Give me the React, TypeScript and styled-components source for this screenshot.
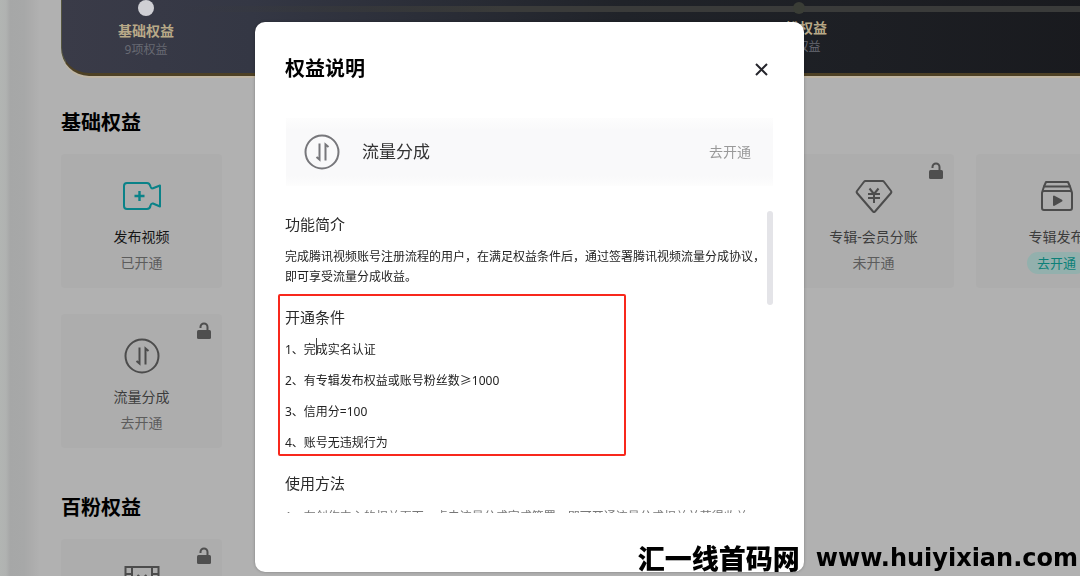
import React from "react";
import styled, { createGlobalStyle } from "styled-components";

const GlobalStyle = createGlobalStyle`
  *, *::after { box-sizing: border-box; margin: 0; padding: 0; }
  body {
    margin: 0;
    overflow: hidden;
    background: #b1b1b1;
    font-family: "Noto Sans", "Noto Sans CJK SC", sans-serif;
    color: #000;
  }
`;

const Page = styled.div`
  display: flex;
  height: 100vh;
  overflow: hidden;
`;

const SideRail = styled.div`
  flex: 0 0 61px;
  background: linear-gradient(90deg, #b2b5b3 0, #b0b2b1 6px, #a6a7a7 10px, #a7a8a8 24px, #acacac 32px, #b1b1b1 40px);
`;

const Main = styled.main`
  flex: 1 0 auto;
`;

const Banner = styled.div`
  height: 76px;
  display: flex;
  gap: 485px;
  border-bottom: 3px solid #4e4125;
  border-left: 1px solid #55553f;
  border-bottom-left-radius: 28px;
  background:
    linear-gradient(90deg, transparent 118px, #3a3b3a 440px) 0 6px / 100% 6px no-repeat,
    linear-gradient(90deg, #3a3b48 0, #343744 190px, #202329 560px, #1d1f24 800px, #18191d 100%);
  box-shadow: 0 2px 0 #c0b6a4;
`;

const Step = styled.div<{ $active?: boolean }>`
  width: 168px;
  display: flex;
  flex-direction: column;
  align-items: center;
  padding-top: ${(p) => (p.$active ? 0 : 2)}px;
`;

const StepDot = styled.span<{ $active?: boolean }>`
  width: ${(p) => (p.$active ? 16 : 12)}px;
  height: ${(p) => (p.$active ? 16 : 12)}px;
  margin-bottom: ${(p) => (p.$active ? 5 : 4)}px;
  border-radius: 50%;
  background: ${(p) => (p.$active ? "#cfcfd4" : "#3a3d36")};
`;

const StepName = styled.span`
  font-size: 14px;
  line-height: 20px;
  font-weight: 700;
  color: #b8a988;
`;

const StepCount = styled.span`
  font-size: 12px;
  line-height: 18px;
  color: #686a73;
`;

const SectionTitle = styled.h2`
  font-size: 20px;
  line-height: 28px;
  font-weight: 700;
`;

const Section = styled.section`
  padding-top: 33px;
  padding-bottom: 13px;
`;

const CardGrid = styled.div`
  display: grid;
  grid-template-columns: repeat(6, 161px);
  grid-auto-rows: 134px;
  gap: 26px 22px;
  margin-top: 17px;
`;

const Card = styled.article<{ $column?: number }>`
  position: relative;
  grid-column: ${(p) => p.$column ?? "auto"};
  display: flex;
  flex-direction: column;
  align-items: center;
  padding-top: 24px;
  border-radius: 4px;
  background: #adadad;
  color: #4c4c4c;
`;

const CardIcon = styled.div`
  height: 36px;
  display: flex;
  align-items: center;
`;

const CardName = styled.h3<{ $active?: boolean }>`
  margin-top: 13px;
  font-size: 14px;
  line-height: 20px;
  font-weight: 400;
  color: ${(p) => (p.$active ? "#161616" : "#3c3c3c")};
`;

const CardStatus = styled.p`
  margin-top: 6px;
  font-size: 14px;
  line-height: 20px;
  color: #5c5c5c;
`;

const CardAction = styled.button`
  margin-top: 5px;
  width: 60px;
  border: 0;
  border-radius: 11px;
  background: #93b0ad;
  color: #0c8078;
  font: 13px/22px "Noto Sans", "Noto Sans CJK SC", sans-serif;
`;

const LockBadge = styled.svg`
  position: absolute;
  top: 8px;
  right: 11px;
`;

const Overlay = styled.div`
  position: fixed;
  inset: 0;
  display: flex;
  justify-content: center;
  padding: 22px 21px 4px 0;
`;

const Dialog = styled.div`
  width: 100%;
  max-width: 549px;
  display: flex;
  flex-direction: column;
  padding: 33px 31px 59px 22px;
  border-radius: 10px;
  background: #fff;
  box-shadow: 0 0 3px rgba(0, 0, 0, 0.3);
`;

const DialogHeader = styled.header`
  display: flex;
  align-items: center;
  justify-content: space-between;
  padding-left: 8px;
`;

const DialogTitle = styled.h1`
  font-size: 20px;
  line-height: 28px;
  font-weight: 700;
`;

const CloseButton = styled.button`
  width: 24px;
  height: 26px;
  display: flex;
  align-items: center;
  justify-content: center;
  border: 0;
  background: none;
  color: #26262c;
`;

const Feature = styled.div`
  display: flex;
  align-items: center;
  gap: 22px;
  height: 68px;
  margin: 35px 0 20px 9px;
  padding: 0 22px 0 18px;
  background: linear-gradient(#fdfdfd, #f9f9fa 12px, #f9f9fa 58px, #fdfdfd);
  color: #77777b;
`;

const FeatureName = styled.span`
  flex: 1;
  font-size: 17px;
  line-height: 24px;
  color: #333;
`;

const FeatureAction = styled.button`
  border: 0;
  background: none;
  color: #999;
  font: 14px/20px "Noto Sans", "Noto Sans CJK SC", sans-serif;
`;

const ScrollArea = styled.div`
  flex: 1;
  min-height: 0;
  display: flex;
`;

const ScrollContent = styled.div`
  flex: 1;
  overflow: hidden;
  padding: 6px 0 0 8px;
`;

const ScrollThumb = styled.div`
  width: 6px;
  height: 94px;
  margin-top: 5px;
  border-radius: 3px;
  background: #e4e4e8;
`;

const Block = styled.section<{ $marked?: boolean }>`
  position: relative;
  margin-bottom: 18px;
  &::after {
    content: "";
    display: ${(p) => (p.$marked ? "block" : "none")};
    position: absolute;
    inset: -11px auto -3px -7px;
    width: 348px;
    border: 2px solid #f8281c;
    border-radius: 2px;
  }
`;

const BlockTitle = styled.h2`
  font-size: 15px;
  line-height: 24px;
  font-weight: 400;
  color: #2b2b2b;
`;

const Paragraph = styled.p`
  margin-top: 11px;
  font-size: 12px;
  line-height: 20px;
  color: #222;
`;

const Rules = styled.ol<{ $muted?: boolean }>`
  list-style: none;
  display: flex;
  flex-direction: column;
  gap: 11px;
  margin-top: ${(p) => (p.$muted ? 12 : 11)}px;
  font-size: 12px;
  line-height: 20px;
  white-space: nowrap;
  color: ${(p) => (p.$muted ? "#777" : "#222")};
`;

const TextCursor = styled.svg`
  position: absolute;
  left: 28px;
  top: 33px;
`;

const Watermark = styled.div`
  position: fixed;
  right: 2px;
  bottom: 0;
  display: flex;
  align-items: center;
  gap: 16px;
  line-height: 36px;
  font-weight: 900;
`;

const WatermarkName = styled.span`
  font-family: "Noto Sans CJK SC", sans-serif;
  font-size: 27px;
`;

const WatermarkSite = styled.span`
  font-family: "DejaVu Sans", sans-serif;
  font-size: 24px;
`;

const SwapIcon = () => (
  <svg width="36" height="36" viewBox="0 0 36 36" fill="none" stroke="currentColor" strokeWidth="2">
    <circle cx="18" cy="18" r="16.5" />
    <path d="M15.500 9.500V25.500L12.500 23M21.500 26.500V10.500L24.500 13" />
  </svg>
);

const CameraIcon = () => (
  <svg width="40" height="30" viewBox="0 0 40 30" fill="none" stroke="#0a8288" strokeWidth="2" strokeLinejoin="round">
    <path d="M5 2H25C27.500 2 28 3.500 28.500 5.500Q29.200 8 31 7.200L38 4.500V25.500L31 22.500Q29.200 22 28.500 24.500Q28 28 25 28H5Q2 28 2 25V5Q2 2 5 2Z" />
    <path d="M17.500 10V20M12.500 15H22.500" strokeWidth="2.4" />
  </svg>
);

const DiamondIcon = () => (
  <svg width="38" height="34" viewBox="0 0 38 34" fill="none" stroke="currentColor" strokeWidth="2" strokeLinejoin="round">
    <path d="M10.500 2H27.500Q28.500 2 29.200 3L36 12Q36.700 13 36 14L20 32.500Q19 33.500 18 32.500L2 14Q1.300 13 2 12L8.800 3Q9.500 2 10.500 2Z" />
    <path d="M14.500 9.500L19 15L23.500 9.500M13 15H25M13 19H25M19 15V24" />
  </svg>
);

const AlbumIcon = () => (
  <svg width="34" height="32" viewBox="0 0 34 32" fill="none" stroke="currentColor" strokeWidth="2" strokeLinejoin="round">
    <path d="M4 6.500L6 2H28L30 6.500" />
    <path d="M2.500 11L4 6.500H30L31.500 11" />
    <rect x="2" y="11" width="30" height="19" rx="2" />
    <path d="M14 16.500V25L21.500 20.700Z" fill="currentColor" />
  </svg>
);

const FilmIcon = () => (
  <svg width="36" height="30" viewBox="0 0 36 30" fill="none" stroke="currentColor" strokeWidth="2">
    <rect x="1.500" y="1" width="33" height="28" />
    <path d="M8 1V29M28 1V29M1.500 8H8M28 8H34.500M1.500 15H8M28 15H34.500M1.500 22H8M28 22H34.500M13.500 9L18 13L22.500 9" />
  </svg>
);

const Lock = () => (
  <LockBadge width="14" height="18" viewBox="0 0 14 18" fill="none">
    <path d="M3.500 6V5A3.500 3.500 0 0 1 10.500 5V8" stroke="#4f4f4f" strokeWidth="2" />
    <rect y="8" width="14" height="9" rx="1.500" fill="#4f4f4f" />
  </LockBadge>
);

export default function App() {
  return (
    <>
      <GlobalStyle />
      <Page>
        <SideRail />
        <Main>
          <Banner>
            <Step $active>
              <StepDot $active />
              <StepName>基础权益</StepName>
              <StepCount>9项权益</StepCount>
            </Step>
            <Step>
              <StepDot />
              <StepName>万粉权益</StepName>
              <StepCount>7项权益</StepCount>
            </Step>
          </Banner>
          <Section>
            <SectionTitle>基础权益</SectionTitle>
            <CardGrid>
              <Card>
                <CardIcon><CameraIcon /></CardIcon>
                <CardName $active>发布视频</CardName>
                <CardStatus>已开通</CardStatus>
              </Card>
              <Card $column={5}>
                <Lock />
                <CardIcon><DiamondIcon /></CardIcon>
                <CardName>专辑-会员分账</CardName>
                <CardStatus>未开通</CardStatus>
              </Card>
              <Card $column={6}>
                <CardIcon><AlbumIcon /></CardIcon>
                <CardName>专辑发布</CardName>
                <CardAction>去开通</CardAction>
              </Card>
              <Card>
                <Lock />
                <CardIcon><SwapIcon /></CardIcon>
                <CardName>流量分成</CardName>
                <CardStatus>去开通</CardStatus>
              </Card>
            </CardGrid>
          </Section>
          <Section>
            <SectionTitle>百粉权益</SectionTitle>
            <CardGrid>
              <Card>
                <Lock />
                <CardIcon><FilmIcon /></CardIcon>
              </Card>
            </CardGrid>
          </Section>
        </Main>
      </Page>

      <Overlay>
        <Dialog role="dialog" aria-modal="true" aria-labelledby="dialog-title">
          <DialogHeader>
            <DialogTitle id="dialog-title">权益说明</DialogTitle>
            <CloseButton aria-label="关闭">
              <svg width="13" height="13" viewBox="0 0 13 13" fill="none" stroke="currentColor" strokeWidth="2">
                <path d="M1 1L12 12M12 1L1 12" />
              </svg>
            </CloseButton>
          </DialogHeader>
          <Feature>
            <SwapIcon />
            <FeatureName>流量分成</FeatureName>
            <FeatureAction>去开通</FeatureAction>
          </Feature>
          <ScrollArea>
            <ScrollContent>
              <Block>
                <BlockTitle>功能简介</BlockTitle>
                <Paragraph>
                  完成腾讯视频账号注册流程的用户，在满足权益条件后，通过签署腾讯视频流量分成协议，即可享受流量分成收益。
                </Paragraph>
              </Block>
              <Block $marked>
                <BlockTitle>开通条件</BlockTitle>
                <Rules>
                  <li>1、完成实名认证</li>
                  <li>2、有专辑发布权益或账号粉丝数≥1000</li>
                  <li>3、信用分=100</li>
                  <li>4、账号无违规行为</li>
                </Rules>
                <TextCursor width="6" height="17" viewBox="0 0 6 17" stroke="#444" strokeWidth="1">
                  <path d="M3.500 0V17" />
                </TextCursor>
              </Block>
              <Block>
                <BlockTitle>使用方法</BlockTitle>
                <Rules $muted>
                  <li>1、在创作中心的权益页面，点击流量分成完成签署，即可开通流量分成权益并获得收益</li>
                </Rules>
              </Block>
            </ScrollContent>
            <ScrollThumb />
          </ScrollArea>
        </Dialog>
      </Overlay>

      <Watermark>
        <WatermarkName>汇一线首码网</WatermarkName>
        <WatermarkSite>www.huiyixian.com</WatermarkSite>
      </Watermark>
    </>
  );
}
